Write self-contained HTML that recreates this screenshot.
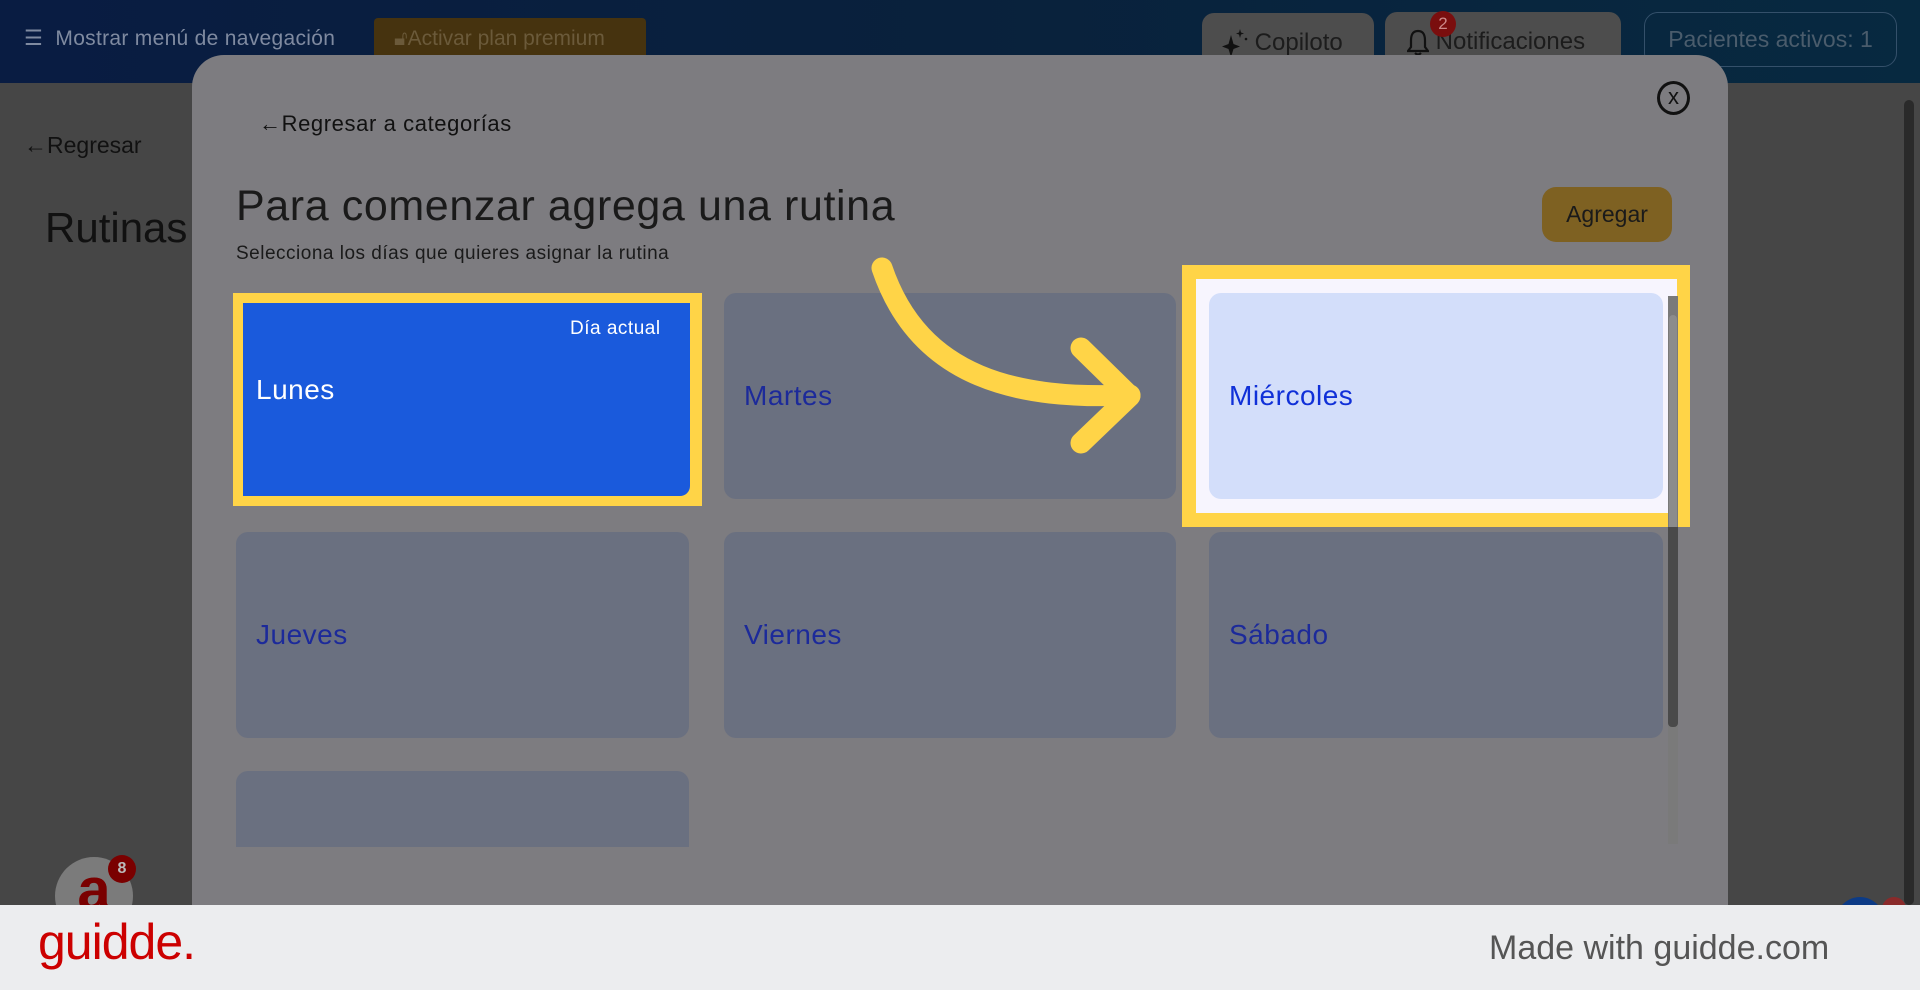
<!DOCTYPE html>
<html><head><meta charset="utf-8">
<style>
*{box-sizing:border-box;margin:0;padding:0}
body{width:1920px;height:990px;overflow:hidden;position:relative;background:#464646;font-family:"Liberation Sans",sans-serif}
.abs{position:absolute}
.hdr{left:0;top:0;width:1920px;height:83px;background:linear-gradient(90deg,#091c42,#09213c 50%,#072940)}
.btn{position:absolute;border-radius:12px;font-size:24px;color:#1c1c1c;display:flex;align-items:center}
.card{position:absolute;border-radius:12px;background:#6a7080;font-size:28px;color:#1c2a9a;padding-left:20px;display:flex;align-items:center;letter-spacing:0.5px}
</style></head><body>
<div class="abs hdr"></div>
<div class="abs" style="left:24px;top:26px;color:#7f8aa0;font-size:21px;letter-spacing:0.3px">☰&nbsp; Mostrar menú de navegación</div>
<div class="abs" style="left:374px;top:18px;width:272px;height:50px;background:#46330f;border-radius:4px;color:#6b5a3a;font-size:21px;padding:9px 0 0 20px">🔓︎Activar plan premium</div>
<div class="btn" style="left:1202px;top:13px;width:172px;height:60px;background:#4d4d4d;padding-left:20px">
<svg width="26" height="28" viewBox="0 0 26 28"><path d="M9 6 L11.5 15 L18 17.5 L11.5 20 L9 28 L6.5 20 L0 17.5 L6.5 15Z" fill="#111"/><path d="M18 0 L19 3.5 L22 4.5 L19 5.5 L18 9 L17 5.5 L14 4.5 L17 3.5Z" fill="#111"/><circle cx="24" cy="10" r="1.3" fill="#111"/></svg>&nbsp;Copiloto</div>
<div class="btn" style="left:1385px;top:12px;width:236px;height:60px;background:#4d4d4d;padding-left:22px">
<svg width="22" height="28" viewBox="0 0 22 28"><path d="M11 3 C5 3 4 8 4 13 L4 19 L1 23 L21 23 L18 19 L18 13 C18 8 17 3 11 3Z M8 25 Q11 28 14 25" fill="none" stroke="#111" stroke-width="2.2"/></svg>&nbsp;Notificaciones</div>
<div class="abs" style="left:1430px;top:11px;width:26px;height:26px;border-radius:50%;background:#7a0e0e;color:#c88;font-size:17px;text-align:center;line-height:26px">2</div>
<div class="abs" style="left:1644px;top:12px;width:253px;height:55px;border:1.5px solid #34506a;border-radius:14px;color:#4a5c6c;font-size:23px;text-align:center;line-height:52px">Pacientes activos: 1</div>
<div class="abs" style="left:24px;top:132px;color:#111;font-size:23px">←Regresar</div>
<div class="abs" style="left:45px;top:204px;color:#111;font-size:42px">Rutinas</div>
<div class="abs" style="left:1904px;top:100px;width:10px;height:805px;background:#2a2a2a;border-radius:5px"></div>
<div class="abs" style="left:55px;top:857px;width:78px;height:78px;border-radius:50%;background:#7b7b7b;color:#7a0000;font-size:60px;font-weight:bold;text-align:center;line-height:66px">a</div>
<div class="abs" style="left:108px;top:855px;width:28px;height:28px;border-radius:50%;background:#7a0000;color:#bbb;font-size:16px;font-weight:bold;text-align:center;line-height:28px">8</div>
<div class="abs" style="left:1836px;top:897px;width:48px;height:48px;border-radius:50%;background:#0c3b86"></div>
<div class="abs" style="left:1882px;top:897px;width:24px;height:24px;border-radius:50%;background:#8a2a2a"></div>
<!-- modal -->
<div class="abs" style="left:192px;top:55px;width:1536px;height:900px;background:#7d7c80;border-radius:32px 32px 0 0"></div>
<div class="abs" style="left:259px;top:111px;color:#111;font-size:22px;letter-spacing:0.6px">←Regresar a categorías</div>
<div class="abs" style="left:1657px;top:81px;width:33px;height:34px;border:3.5px solid #111;border-radius:50%;text-align:center;font-size:22px;line-height:26px;color:#111">x</div>
<div class="abs" style="left:236px;top:182px;color:#1a1a1a;font-size:43px;letter-spacing:0.6px">Para comenzar agrega una rutina</div>
<div class="abs" style="left:236px;top:243px;color:#1a1a1a;font-size:19px;letter-spacing:0.5px">Selecciona los días que quieres asignar la rutina</div>
<div class="abs" style="left:1542px;top:187px;width:130px;height:55px;background:#7e6122;border-radius:14px;color:#1a1a1a;font-size:23px;text-align:center;line-height:55px">Agregar</div>
<!-- cards -->
<div class="abs" style="left:233px;top:293px;width:469px;height:213px;background:#ffd447"></div>
<div class="card" style="left:243px;top:303px;width:447px;height:193px;background:#1a5adc;color:#fff;border-radius:0 0 10px 0;padding-left:13px;align-items:flex-start;padding-top:71px">Lunes</div>
<div class="abs" style="left:570px;top:318px;color:#fff;font-size:19px;letter-spacing:0.5px">Día actual</div>
<div class="card" style="left:724px;top:293px;width:452px;height:206px">Martes</div>
<div class="abs" style="left:1182px;top:265px;width:508px;height:262px;background:#ffd447"></div>
<div class="abs" style="left:1196px;top:279px;width:481px;height:234px;background:#f7f5fe"></div>
<div class="card" style="left:1209px;top:293px;width:454px;height:206px;background:#d3defa;color:#1030d8">Miércoles</div>
<div class="card" style="left:236px;top:532px;width:453px;height:206px">Jueves</div>
<div class="card" style="left:724px;top:532px;width:452px;height:206px">Viernes</div>
<div class="card" style="left:1209px;top:532px;width:454px;height:206px">Sábado</div>
<div class="abs" style="left:236px;top:771px;width:453px;height:76px;background:#6a7080;border-radius:12px 12px 0 0"></div>
<!-- scrollbar -->
<div class="abs" style="left:1668px;top:296px;width:10px;height:548px;background:#7a7a7a"></div>
<div class="abs" style="left:1669px;top:315px;width:8px;height:410px;background:#8c8c8c;border-radius:4px"></div>
<div class="abs" style="left:1668px;top:527px;width:10px;height:200px;background:#4a4a4a;border-radius:0 0 4px 4px"></div>
<!-- arrow -->
<svg class="abs" style="left:0;top:0" width="1920" height="990"><g fill="none" stroke="#ffd447" stroke-width="21" stroke-linecap="round" stroke-linejoin="round"><path d="M882 268 C920 380 1020 400 1130 395"/><path d="M1081 348 L1130 396 L1081 443"/></g></svg>
<!-- footer -->
<div class="abs" style="left:0;top:905px;width:1920px;height:85px;background:#ecedef"></div>
<div class="abs" style="left:38px;top:913px;color:#cc0000;font-size:50px;letter-spacing:-1px">guidde.</div>
<div class="abs" style="left:1489px;top:929px;color:#555;font-size:34px">Made with guidde.com</div>
</body></html>
